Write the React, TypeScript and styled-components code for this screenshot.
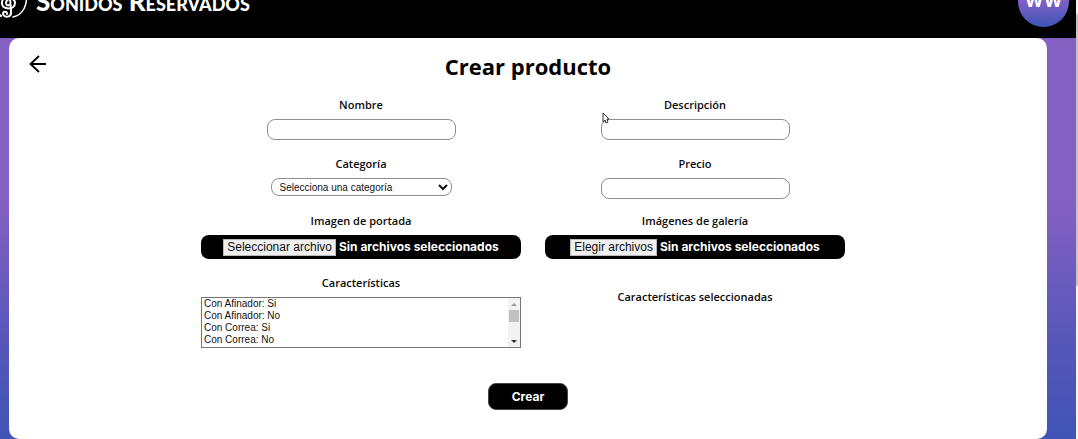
import React, { useId, useState } from 'react';
import styled, { createGlobalStyle } from 'styled-components';

const ui = "'Open Sans', 'Noto Sans', sans-serif";
const arial = "'Liberation Sans', Arial, sans-serif";
const display = "'Inter', sans-serif";

const GlobalStyle = createGlobalStyle`
  *, *::before, *::after { box-sizing: border-box; }
  html, body, #root { height: 100%; }
  body { margin: 0; overflow: hidden; background: #fff; font-family: ${ui}; color: #0b0b0b; }
`;

const Window = styled.div`
  display: grid;
  grid-template-columns: 1fr 2px;
  height: 100vh;
`;

const Page = styled.div`
  display: flex;
  flex-direction: column;
  min-width: 0;
  background: linear-gradient(#8560c3 0, #8560c3 45%, #5657b8 78%, #4054b5 100%);
`;

const PageScrollbar = styled.div`
  display: flex;
  flex-direction: column;
  padding-top: 14px;
  background: #f4f4f4;
`;

const PageThumb = styled.div`
  height: 64%;
  background: #c4c4c4;
`;

const Header = styled.header`
  display: flex;
  align-items: flex-end;
  flex: none;
  height: 38px;
  overflow: hidden;
  background: #000;
`;

const HeaderBar = styled.div`
  display: flex;
  flex: 1;
  align-items: center;
  justify-content: space-between;
  height: 74px;
  padding-right: 7px;
`;

const Brand = styled.a`
  display: flex;
  align-items: center;
  gap: 8px;
  color: #fff;
  font: 900 26px/32px Lato, sans-serif;
  font-variant-caps: small-caps;
  text-decoration: none;
`;

const Avatar = styled.button`
  width: 51px;
  height: 51px;
  padding: 0;
  border: 0;
  border-radius: 50%;
  background: linear-gradient(#8a62c6 40%, #3f55b8);
  color: #fff;
  font: 700 18px/24px ${display};
`;

const Card = styled.main`
  display: flex;
  flex-direction: column;
  flex: 1;
  margin: 0 29px 0 9px;
  padding: 12px 20px;
  border-radius: 10px;
  background: #fff;
`;

const TitleRow = styled.div`
  display: grid;
  grid-template-columns: 20px 1fr 20px;
  align-items: start;
`;

const BackLink = styled.a`
  display: block;
  height: 28px;
  padding-top: 5px;
  color: #000;
`;

const Title = styled.h1`
  margin: 0;
  font: 700 22px/32px ${ui};
  color: #000;
  text-align: center;
`;

const Form = styled.form`
  display: flex;
  flex-direction: column;
  align-items: center;
`;

const Columns = styled.div`
  display: grid;
  grid-template-columns: minmax(0, 320px) minmax(0, 300px);
  gap: 0 24px;
  width: 100%;
  justify-content: center;
  padding: 15px 10px 0 0;
`;

const Field = styled.div<{ $space?: number }>`
  display: flex;
  flex-direction: column;
  align-items: center;
  gap: 6px;
  padding-bottom: ${p => p.$space ?? 16}px;
`;

const Label = styled.label`
  font: 600 11px/16px ${ui};
`;

const Note = styled.h2`
  margin: 14px 0 0;
  font: 600 11px/16px ${ui};
`;

const TextInput = styled.input`
  width: 189px;
  max-width: 100%;
  height: 21px;
  padding: 0 8px;
  border: 1px solid #8f8f8f;
  border-radius: 8px;
  background: #fff;
  font: 10px/12px ${arial};
`;

const Select = styled.select`
  width: 181px;
  max-width: 100%;
  height: 18px;
  padding: 0 0 0 4px;
  border: 1px solid #8f8f8f;
  border-radius: 8px;
  background: #fff;
  color: #111;
  font: 10px/12px ${arial};
`;

const FilePill = styled.label`
  position: relative;
  display: flex;
  align-items: center;
  justify-content: center;
  gap: 3px;
  width: 100%;
  height: 24px;
  border-radius: 8px;
  background: #000;
  color: #fff;
  font: 700 12px/16px ${display};
  white-space: nowrap;
`;

const FileButton = styled.span`
  padding: 0 3px;
  border: 1px solid #bbb;
  background: #efefef;
  color: #111;
  font: 12px/15px ${arial};
`;

const HiddenFile = styled.input`
  position: absolute;
  inset: 0;
  width: 100%;
  opacity: 0;
`;

const ListFrame = styled.div`
  display: grid;
  width: 100%;
`;

const ListBox = styled.select`
  grid-area: 1 / 1;
  width: 100%;
  height: 51px;
  padding: 0;
  border: 1px solid #777;
  border-radius: 0;
  background: #fff;
  color: #111;
  font: 10px/12px ${arial};

  option { min-height: 12px; padding: 0 2px; line-height: 12px; }
`;

const ListRail = styled.div`
  grid-area: 1 / 1;
  justify-self: end;
  z-index: 1;
  display: flex;
  flex-direction: column;
  width: 12px;
  margin: 1px;
  padding: 0 1px;
  background: #f3f3f3;
  pointer-events: none;
`;

const ListThumb = styled.div`
  height: 12px;
  margin-bottom: auto;
  background: #c1c1c1;
`;

const Submit = styled.button`
  width: 80px;
  height: 27px;
  margin-top: 19px;
  padding: 0;
  border: 1px solid #444;
  border-radius: 8px;
  background: #000;
  color: #fff;
  font: 700 12px/16px ${display};
`;

const Pointer = styled.svg`
  position: absolute;
  left: 602px;
  top: 112px;
`;

const features = ['Afinador', 'Correa'];

function LogoMark() {
  return (
    <svg width="28" height="56" viewBox="0 0 28 56" fill="none" stroke="#fff" strokeLinecap="round" aria-hidden="true">
      <path d="M26 20C28 32 23 42 13 44" strokeWidth="1.500" />
      <path d="M9 12L11 38C12 45 4 45 3 41C3 38 7 38 7 41" strokeWidth="2" />
      <path d="M13 18C6 22 1 26 2 31C3 37 15 37 15 30C15 24 6 25 6 30C6 32 8 33 9 32" strokeWidth="2" />
      <path d="M0 42L1 43" strokeWidth="2" />
    </svg>
  );
}

function FileField({ label, action, multiple }: { label: string; action: string; multiple?: boolean }) {
  const id = useId();
  const [count, setCount] = useState(0);
  return (
    <Field>
      <Label htmlFor={id}>{label}</Label>
      <FilePill>
        <FileButton>{action}</FileButton>
        <span>{count ? `${count} archivos` : 'Sin archivos seleccionados'}</span>
        <HiddenFile id={id} type="file" multiple={multiple} onChange={e => setCount(e.target.files?.length ?? 0)} />
      </FilePill>
    </Field>
  );
}

export default function App() {
  return (
    <Window>
      <GlobalStyle />
      <Page>
        <Header>
          <HeaderBar>
            <Brand href="#"><LogoMark />Sonidos Reservados</Brand>
            <Avatar type="button">WW</Avatar>
          </HeaderBar>
        </Header>
        <Card>
          <TitleRow>
            <BackLink href="#" aria-label="Volver">
              <svg width="18" height="18" viewBox="0 0 18 18" fill="none" stroke="currentColor" strokeWidth="1.800">
                <path d="M17 9H2M10 1L1.500 9L10 17" />
              </svg>
            </BackLink>
            <Title>Crear producto</Title>
          </TitleRow>
          <Form onSubmit={e => e.preventDefault()}>
            <Columns>
              <Field>
                <Label htmlFor="nombre">Nombre</Label>
                <TextInput id="nombre" />
              </Field>
              <Field>
                <Label htmlFor="descripcion">Descripción</Label>
                <TextInput id="descripcion" />
              </Field>
              <Field>
                <Label htmlFor="categoria">Categoría</Label>
                <Select id="categoria"><option>Selecciona una categoría</option></Select>
              </Field>
              <Field $space={14}>
                <Label htmlFor="precio">Precio</Label>
                <TextInput id="precio" />
              </Field>
              <FileField label="Imagen de portada" action="Seleccionar archivo" />
              <FileField label="Imágenes de galería" action="Elegir archivos" multiple />
              <Field>
                <Label htmlFor="caracteristicas">Características</Label>
                <ListFrame>
                  <ListBox id="caracteristicas" multiple size={4}>
                    {features.flatMap(f => ['Si', 'No'].map(v => <option key={f + v}>{`Con ${f}: ${v}`}</option>))}
                  </ListBox>
                  <ListRail>
                    <svg width="10" height="12" viewBox="0 0 10 12" aria-hidden="true"><path d="M2 8L5 5L8 8Z" fill="#999" /></svg>
                    <ListThumb />
                    <svg width="10" height="12" viewBox="0 0 10 12" aria-hidden="true"><path d="M2 5L5 8L8 5Z" fill="#333" /></svg>
                  </ListRail>
                </ListFrame>
              </Field>
              <Field><Note>Características seleccionadas</Note></Field>
            </Columns>
            <Submit type="submit">Crear</Submit>
          </Form>
        </Card>
      </Page>
      <PageScrollbar><PageThumb /></PageScrollbar>
      <Pointer width="8" height="12" viewBox="0 0 8 12" fill="#fff" stroke="#333" aria-hidden="true">
        <path d="M1 1V10L3 8L4 11L6 10L5 7H7Z" />
      </Pointer>
    </Window>
  );
}
